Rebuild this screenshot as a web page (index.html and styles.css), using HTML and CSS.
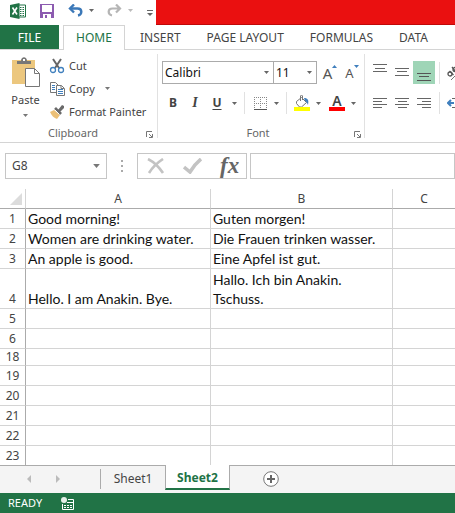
FILE: index.html
```html
<!DOCTYPE html>
<html lang="en">
<head>
<meta charset="utf-8">
<title>Excel</title>
<link rel="stylesheet" href="styles.css">
</head>
<body>
<svg class="defs" aria-hidden="true">
  <symbol id="down" viewBox="0 0 5 3"><path d="M0 0h5L2.500 3z" fill="currentColor"/></symbol>
  <symbol id="launch" viewBox="0 0 7 7"><path d="M.5 6V.5H6M3 3l3 3M6.500 3v3.500H3" fill="none" stroke="#777"/></symbol>
</svg>
<div class="app">
  <header class="titlebar">
    <div class="quick">
      <svg class="logo" width="16" height="16" viewBox="0 0 16 16"><path d="M9 2h6.500v12H9" fill="#fff" stroke="#217346"/><path d="M10 4.500h1.500M12.500 4.500H14M10 6.500h1.500M12.500 6.500H14M10 8.500h1.500M12.500 8.500H14M10 10.500h1.500M12.500 10.500H14M10 12.500h1.500M12.500 12.500H14" stroke="#217346"/><path d="M0 2l9.500-2v16L0 14z" fill="#217346"/><path d="M2.500 4.500l4.500 7M7 4.500l-4.500 7" stroke="#fff" stroke-width="1.600"/></svg>
      <button class="save" aria-label="Save"><svg width="14" height="14" viewBox="0 0 14 14"><path d="M0 0h14v14H0z" fill="#8c5bb0"/><path d="M2 1h10v7H2zM3 10h8v4H3z" fill="#fff"/><path d="M5 11h2v3H5z" fill="#8c5bb0"/></svg></button>
      <button class="undo" aria-label="Undo"><svg width="15" height="13" viewBox="0 0 15 13"><path d="M2 4.500h7.500c5 0 5 6 .500 7" fill="none" stroke="#3b78b8" stroke-width="2.400"/><path d="M6 .5L2 4.500l4 4" fill="none" stroke="#3b78b8" stroke-width="2.400"/></svg></button>
      <button class="undo-more" aria-label="Undo list"><svg width="5" height="3"><use href="#down"/></svg></button>
      <button class="redo" aria-label="Redo"><svg width="15" height="13" viewBox="0 0 15 13"><path d="M13 4.500H5.500c-5 0-5 6-.500 7M9 .5l4 4-4 4" fill="none" stroke="#b5b5b5" stroke-width="2.200"/></svg></button>
      <button class="redo-more" aria-label="Redo list"><svg width="5" height="3"><use href="#down"/></svg></button>
      <button class="customize" aria-label="Customize toolbar"><svg width="6" height="6" viewBox="0 0 6 6"><path d="M0 .5h6" stroke="#666"/><path d="M0 3h6L3 6z" fill="#666"/></svg></button>
    </div>
    <div class="banner"></div>
  </header>
  <nav class="tabs">
    <a class="file" href="#">FILE</a>
    <a class="home" href="#">HOME</a>
    <a href="#">INSERT</a>
    <a href="#">PAGE LAYOUT</a>
    <a href="#">FORMULAS</a>
    <a href="#">DATA</a>
  </nav>
  <section class="ribbon">
    <div class="group clipboard">
      <div class="clip-body">
        <button class="paste"><svg width="29" height="31" viewBox="0 0 29 31"><path d="M1 3h23v24H1z" fill="#ecc77e"/><path d="M6 7V4h4c0-5 6-5 6 0h4v3z" fill="#777"/><path d="M12 2h2v2h-2z" fill="#fff"/><path d="M14.500 11.500h9l5 5v13h-14z" fill="#fff" stroke="#777"/><path d="M23.500 11.500v5h5" fill="none" stroke="#777"/></svg><span>Paste</span><svg class="arrow" width="5" height="3"><use href="#down"/></svg></button>
        <div class="clip-list">
          <button><svg width="16" height="16" viewBox="0 0 16 16"><path d="M4 1l6 9M12 1L6 10" stroke="#666" stroke-width="2"/><circle cx="4" cy="12" r="2.500" fill="none" stroke="#3f7fbd" stroke-width="1.300"/><circle cx="12" cy="12" r="2.500" fill="none" stroke="#3f7fbd" stroke-width="1.300"/></svg>Cut</button>
          <button><svg width="16" height="16" viewBox="0 0 16 16"><path d="M1.500 1.500h5l3 3v7h-8z" fill="#fff" stroke="#777"/><path d="M3 4.500h3M3 6.500h3M3 8.500h3" stroke="#3f7fbd"/><path d="M7.500 4.500h5l3 3v7h-8z" fill="#fff" stroke="#777"/><path d="M12 4.500v3h3" fill="none" stroke="#777"/><path d="M9 8.500h5M9 10.500h5M9 12.500h5" stroke="#3f7fbd"/></svg>Copy<svg class="arrow" width="5" height="3"><use href="#down"/></svg></button>
          <button><svg width="16" height="16" viewBox="0 0 16 16"><path d="M1 8l4-2 6 5-3 4c-3-1-5-3-7-7z" fill="#ecc077"/><path d="M5 5l2-2 6 6-2 2zM9 6l4-5 2 1v2l-4 4z" fill="#6a6a6a"/><path d="M5.500 5.500l5 5" stroke="#fff"/></svg>Format Painter</button>
        </div>
      </div>
      <div class="caption"><span>Clipboard</span><button class="launch" aria-label="Clipboard options"><svg width="7" height="7"><use href="#launch"/></svg></button></div>
    </div>
    <div class="group font">
      <div class="row fonts">
        <label class="combo family"><select aria-label="Font"><option>Calibri</option></select><svg width="5" height="3"><use href="#down"/></svg></label>
        <label class="combo size"><select aria-label="Font size"><option>11</option></select><svg width="5" height="3"><use href="#down"/></svg></label>
        <button class="grow" aria-label="Increase font size"><span>A</span><svg width="5" height="3" viewBox="0 0 5 3"><path d="M0 3h5L2.500 0z" fill="#3f7fbd"/></svg></button>
        <button class="shrink" aria-label="Decrease font size"><span>A</span><svg width="5" height="3" viewBox="0 0 5 3"><path d="M0 0h5L2.500 3z" fill="#3f7fbd"/></svg></button>
      </div>
      <div class="row styles">
        <button class="bold">B</button>
        <button class="italic">I</button>
        <button class="under">U</button>
        <button class="more" aria-label="Underline list"><svg width="5" height="3"><use href="#down"/></svg></button>
        <i class="rule"></i>
        <button class="wide" aria-label="Borders"><svg width="13" height="13" viewBox="0 0 13 13"><path d="M.5 0v12M6.500 0v12M12.500 0v12M0 .5h13M0 6.500h13" stroke="#888" stroke-dasharray="1 1"/><path d="M0 12.500h13" stroke="#555"/></svg></button>
        <button class="more" aria-label="Borders list"><svg width="5" height="3"><use href="#down"/></svg></button>
        <i class="rule"></i>
        <button class="wide" aria-label="Fill color"><svg width="16" height="16" viewBox="0 0 16 16"><path d="M2.500 6.500l5-4 5 5-5 4.500h-2l-3-3.500zM6.500 6V1c0-1 2-1 2 0v4" fill="#fff" stroke="#777"/><path d="M10 3c4 0 5 2 4 7-1-2-1-3-3-4z" fill="#3f7fbd"/><path d="M0 12h16v4H0z" fill="#ff0"/></svg></button>
        <button class="more" aria-label="Fill colors"><svg width="5" height="3"><use href="#down"/></svg></button>
        <button class="wide color" aria-label="Font color"><span>A</span></button>
        <button class="more" aria-label="Font colors"><svg width="5" height="3"><use href="#down"/></svg></button>
      </div>
      <div class="caption"><span>Font</span><button class="launch" aria-label="Font options"><svg width="7" height="7"><use href="#launch"/></svg></button></div>
    </div>
    <div class="group align">
      <div class="row">
        <button aria-label="Top align"><svg width="14" height="20" viewBox="0 0 14 20"><path d="M0 1.500h14M2 5.500h10M0 8.500h14" stroke="#666"/></svg></button>
        <button aria-label="Middle align"><svg width="14" height="20" viewBox="0 0 14 20"><path d="M0 5.500h14M2 8.500h10M0 12.500h14" stroke="#666"/></svg></button>
        <button class="on" aria-label="Bottom align"><svg width="14" height="20" viewBox="0 0 14 20"><path d="M0 10.500h14M2 13.500h10M0 17.500h14" stroke="#555"/></svg></button>
        <i class="rule"></i>
        <button class="cut" aria-label="Orientation"><svg width="16" height="16" viewBox="0 0 16 16"><g fill="none" stroke="#555" stroke-width="1.300"><circle cx="3" cy="9" r="2"/><path d="M2.500 6l4 4M5 2l4 5"/><circle cx="8" cy="4.500" r="2"/></g><path d="M4 15L15 4" stroke="#777"/></svg></button>
      </div>
      <div class="row">
        <button aria-label="Align left"><svg width="14" height="12" viewBox="0 0 14 12"><path d="M0 1.500h14M0 4.500h9M0 7.500h14M0 10.500h9" stroke="#666"/></svg></button>
        <button aria-label="Center"><svg width="14" height="12" viewBox="0 0 14 12"><path d="M0 1.500h14M3 4.500h9M0 7.500h14M3 10.500h9" stroke="#666"/></svg></button>
        <button aria-label="Align right"><svg width="14" height="12" viewBox="0 0 14 12"><path d="M0 1.500h14M5 4.500h9M0 7.500h14M5 10.500h9" stroke="#666"/></svg></button>
        <i class="rule"></i>
        <button class="cut" aria-label="Decrease indent"><svg width="16" height="12" viewBox="0 0 16 12"><path d="M5 1.500h11M8 4.500h8M8 7.500h8M5 10.500h11" stroke="#666"/><path d="M7 6H1M4 3L1 6l3 3" stroke="#3f7fbd" stroke-width="2" fill="none"/></svg></button>
      </div>
    </div>
  </section>
  <section class="formula">
    <label class="namebox"><input aria-label="Name box" value="G8"><svg width="7" height="4"><use href="#down"/></svg></label>
    <svg class="grip" width="2" height="12" viewBox="0 0 2 12"><path d="M0 0h2v2H0zM0 5h2v2H0zM0 10h2v2H0z" fill="#aaa"/></svg>
    <div class="entry">
      <button aria-label="Cancel"><svg width="18" height="16" viewBox="0 0 18 16"><path d="M1 1c6 3 11 8 15 14M16 1C10 5 5 10 2 15" fill="none" stroke="#c3c3c3" stroke-width="2.600"/></svg></button>
      <button aria-label="Enter"><svg width="19" height="16" viewBox="0 0 19 16"><path d="M1 9l6 5C10 9 13 5 18 1" fill="none" stroke="#c3c3c3" stroke-width="3.500"/></svg></button>
      <button class="fx" aria-label="Insert function">fx</button>
    </div>
    <input class="value" aria-label="Formula">
  </section>
  <table class="sheet">
    <colgroup><col class="c-num"><col class="c-a"><col class="c-b"><col></colgroup>
    <thead><tr><th><svg width="12" height="12" viewBox="0 0 12 12"><path d="M12 0v12H0z" fill="#dcdcdc"/></svg></th><th>A</th><th>B</th><th>C</th></tr></thead>
    <tbody>
      <tr><th>1</th><td>Good morning!</td><td>Guten morgen!</td><td></td></tr>
      <tr><th>2</th><td>Women are drinking water.</td><td>Die Frauen trinken wasser.</td><td></td></tr>
      <tr><th>3</th><td>An apple is good.</td><td>Eine Apfel ist gut.</td><td></td></tr>
      <tr class="tall"><th>4</th><td>Hello. I am Anakin. Bye.</td><td>Hallo. Ich bin Anakin.<br>Tschuss.</td><td></td></tr>
      <tr><th>5</th><td></td><td></td><td></td></tr>
      <tr><th>6</th><td></td><td></td><td></td></tr>
      <tr class="short"><th>18</th><td></td><td></td><td></td></tr>
      <tr><th>19</th><td></td><td></td><td></td></tr>
      <tr><th>20</th><td></td><td></td><td></td></tr>
      <tr><th>21</th><td></td><td></td><td></td></tr>
      <tr><th>22</th><td></td><td></td><td></td></tr>
      <tr><th>23</th><td></td><td></td><td></td></tr>
    </tbody>
  </table>
  <nav class="sheets">
    <div class="pager">
      <button aria-label="Previous sheet"><svg width="4" height="8" viewBox="0 0 4 8"><path d="M4 0v8L0 4z" fill="#bbb"/></svg></button>
      <button aria-label="Next sheet"><svg width="4" height="8" viewBox="0 0 4 8"><path d="M0 0v8l4-4z" fill="#bbb"/></svg></button>
    </div>
    <a class="tab" href="#">Sheet1</a>
    <a class="tab current" href="#">Sheet2</a>
    <button class="add" aria-label="New sheet"><svg width="16" height="16" viewBox="0 0 16 16"><circle cx="8" cy="8" r="7.300" fill="#fff" stroke="#777"/><path d="M4 8h8M8 4v8" stroke="#666" stroke-width="2"/></svg></button>
  </nav>
  <footer class="status">
    <span>READY</span>
    <svg width="13" height="13" viewBox="0 0 13 13"><path d="M7 2.500h5.500v10h-11V7M6 5.500h6" fill="none" stroke="#fff"/><path d="M3 8.500h8M3 10.500h8" stroke="#fff" stroke-dasharray="2 1"/><circle cx="3" cy="3" r="3" fill="#e4f0e8"/></svg>
  </footer>
</div>
</body>
</html>
```
FILE: styles.css
```css
* { box-sizing: border-box; }
body { margin: 0; background: #fff; color: #444; font: 12px/16px "Noto Sans", "Open Sans", sans-serif; overflow-x: hidden; }
button, input, select { font: inherit; color: inherit; border: 0; padding: 0; margin: 0; background: none; border-radius: 0; appearance: none; outline: 0; }
button { display: flex; align-items: center; justify-content: center; flex: none; }
a { color: inherit; text-decoration: none; }
svg { display: block; flex: none; }
.defs { position: absolute; width: 0; height: 0; }
.app { display: flex; flex-direction: column; min-height: 100vh; overflow: hidden; }

.titlebar { display: flex; height: 25px; }
.quick { display: flex; align-items: center; flex: none; width: 156px; padding: 0 0 4px 10px; }
.save { margin-left: 14px; }
.undo { margin-left: 14px; }
.undo-more { margin-left: 6px; color: #666; }
.redo { margin-left: 13px; }
.redo-more { margin-left: 6px; color: #bbb; }
.customize { margin-left: 14px; padding-top: 4px; }
.banner { flex: 1; background: #ea1010; border-bottom: 1px solid #c00808; }

.tabs { display: flex; height: 25px; border-bottom: 1px solid #d4d4d4; white-space: nowrap; line-height: 26px; }
.tabs a { flex: none; margin-right: 26px; }
.tabs .file { width: 59px; margin-right: 4px; background: #217346; color: #fff; text-align: center; }
.tabs .home { width: 62px; height: 25px; line-height: 24px; margin-right: 15px; border: 1px solid #d4d4d4; border-bottom: 0; background: #fff; color: #217346; text-align: center; }

.ribbon { display: flex; height: 93px; padding-top: 4px; border-bottom: 1px solid #d4d4d4; }
.group { display: flex; flex-direction: column; flex: none; height: 84px; border-right: 1px solid #e1e1e1; }
.clipboard { width: 158px; font-size: 11px; }
.clip-body { display: flex; height: 72px; }
.paste { flex-direction: column; justify-content: flex-start; width: 49px; padding: 3px 0 0 2px; }
.paste span { margin: 4px 0 6px; }
.arrow { color: #777; }
.clip-list button { height: 23px; gap: 4px; white-space: nowrap; }
.clip-list .arrow { margin-left: 6px; }
.caption { display: flex; align-items: center; height: 10px; margin-top: auto; color: #666; font-size: 11px; line-height: 10px; }
.caption span { flex: 1; text-align: center; }
.clipboard .caption span { padding-left: 0; }
.caption .launch { width: 7px; margin: 2px 4px 0 0; }
.font .caption .launch { margin-right: 3px; }
.font { width: 207px; padding-left: 4px; }
.row { display: flex; align-items: center; flex: none; }
.fonts { height: 37px; }
.combo { display: flex; align-items: center; height: 23px; border: 1px solid #ababab; color: #111; }
.combo select { flex: 1; min-width: 0; padding-left: 2px; height: 21px; }
.combo svg { margin-right: 4px; color: #666; }
.family { width: 112px; }
.size { width: 44px; margin-left: -1px; }
.grow, .shrink { width: 22px; color: #555; align-items: flex-start; }
.grow { font-size: 15px; margin-left: 2px; }
.shrink { font-size: 13px; }
.styles { height: 24px; }
.styles button { width: 22px; height: 23px; font-size: 12px; }
.styles .more { width: 12px; color: #666; }
.styles .wide { width: 20px; margin-left: 4px; }
.bold { font-weight: 700; }
.styles .italic { font-family: "Liberation Serif", serif; font-style: italic; font-weight: 700; font-size: 14px; }
.under { font-weight: 700; text-decoration: underline; text-underline-offset: 2px; }
.rule { flex: none; width: 1px; height: 22px; margin-left: 4px; background: #e1e1e1; }
.styles .color { margin-left: 3px; }
.color span { width: 16px; height: 16px; border-bottom: 4px solid #f00; font-size: 14px; line-height: 12px; font-weight: 600; }
.styles .rule + .wide { margin-left: 5px; }
.align { flex: 1; min-width: 0; padding-left: 4px; border-right: 0; overflow: hidden; }
.align .row { height: 24px; }
.align .row:first-child { height: 37px; }
.align button { width: 22px; height: 23px; }
.align .on { background: #9fd5b7; }
.align .cut { margin-left: 4px; }

.formula { display: flex; align-items: center; padding: 10px 0 10px 5px; }
.namebox { display: flex; align-items: center; flex: none; width: 102px; height: 26px; border: 1px solid #c6c6c6; color: #777; }
.namebox input { flex: 1; min-width: 0; padding-left: 6px; color: #444; }
.namebox svg { margin-right: 6px; }
.grip { margin: 0 14px; }
.entry { display: flex; align-items: center; flex: none; width: 110px; height: 26px; padding-left: 9px; gap: 18px; border: 1px solid #c6c6c6; }
.fx { font: italic 700 23px/24px "Liberation Serif", serif; color: #666; }
.value { flex: 1; min-width: 0; height: 26px; margin-left: 3px; border: 1px solid #c6c6c6; }

.sheet { width: 100%; table-layout: fixed; border-collapse: separate; border-spacing: 0; line-height: 19px; }
.c-num { width: 26px; }
.c-a { width: 185px; }
.c-b { width: 182px; }
.sheet th, .sheet td { height: 20px; padding: 0; border: solid #d4d4d4; border-width: 0 1px 1px 0; vertical-align: bottom; white-space: nowrap; }
.sheet th { font-weight: 400; text-align: center; }
.sheet thead th { border-bottom-color: #ababab; }
.sheet th svg { margin: 0 0 3px 10px; }
.sheet tbody th { border-right-color: #ababab; }
.sheet td { padding-left: 2px; color: #111; font: 14px/19px Lato, "Noto Sans", sans-serif; }
.sheet tr > :last-child { border-right: 0; }
.sheet .tall > * { height: 40px; }
.sheet .short th, .sheet .short td { height: 17px; line-height: 16px; }
.sheet tbody tr:last-child > * { height: 19px; border-bottom: 0; }

.sheets { display: flex; height: 28px; border-top: 1px solid #ababab; background: #f4f4f4; }
.pager { display: flex; align-items: center; gap: 25px; width: 101px; height: 20px; margin-top: 3px; padding-left: 27px; border-right: 1px solid #ababab; }
.tab { width: 64px; line-height: 25px; text-align: center; }
.current { width: 65px; height: 25px; margin-top: -1px; border: solid #ababab; border-width: 0 1px; border-bottom: 2px solid #217346; background: #fff; color: #217346; font-weight: 700; }
.add { margin-left: 33px; height: 26px; }
.status { display: flex; align-items: center; flex: 1; gap: 19px; min-height: 20px; padding-left: 8px; background: #217346; color: #fff; font-size: 11px; }
```
